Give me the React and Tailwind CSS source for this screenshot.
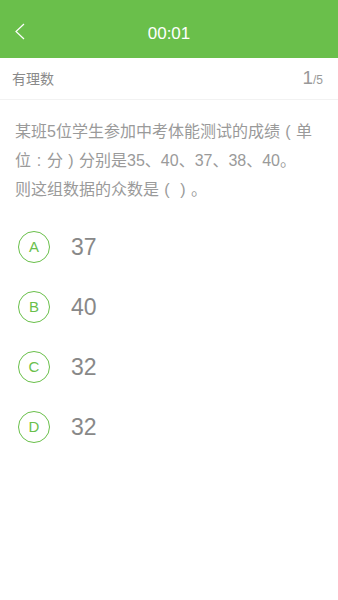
const options = [
  { key: 'A', value: '37' },
  { key: 'B', value: '40' },
  { key: 'C', value: '32' },
  { key: 'D', value: '32' },
];

// full-width cell with the mark centred, as the punctuation shows in the picture
function P({ children }) {
  return <span className="inline-block w-[1em] text-center">{children}</span>;
}

export default function App() {
  return (
    <div
      className="w-[338px] h-[600px] bg-white flex flex-col"
      style={{ fontFamily: '"Liberation Sans", "Noto Sans CJK SC", sans-serif' }}
    >
      {/* Header */}
      <div className="h-[58px] bg-[#6abf4b] flex items-center relative">
        <svg className="absolute left-[14px] top-[23px]" width="12" height="17" viewBox="0 0 12 17" fill="none">
          <path d="M10 1L2 8.5L10 16" stroke="white" strokeWidth="1.2" />
        </svg>
        <div className="flex-1 text-center text-white text-[17px] pt-[9px]">00:01</div>
      </div>

      {/* Category row */}
      <div className="h-[42px] flex items-center justify-between px-[12px] border-b border-[#f2f2f2]">
        <span className="text-[14px] text-[#8a8a8a] pt-[2px]">有理数</span>
        <span className="text-[#999] pr-[3px]">
          <span className="text-[19px]">1</span>
          <span className="text-[12px]">/5</span>
        </span>
      </div>

      {/* Question */}
      <div className="px-[15px] pt-[17px] text-[16px] leading-[29px] text-[#9a9a9a]">
        某班5位学生参加中考体能测试的成绩<P>(</P>单
        <br />
        位<P>:</P>分<P>)</P>分别是35、40、37、38、40。
        <br />
        则这组数据的众数是<P>(</P><P>)</P>。
      </div>

      {/* Options */}
      <div className="flex flex-col pt-[13px]">
        {options.map((o) => (
          <div key={o.key} className="h-[60px] flex items-center px-[18px]">
            <div className="w-[32px] h-[32px] rounded-full border border-[#6abf4b] flex items-center justify-center text-[#6abf4b] text-[15px]">
              {o.key}
            </div>
            <span className="ml-[21px] text-[23px] text-[#888]">{o.value}</span>
          </div>
        ))}
      </div>
    </div>
  );
}
